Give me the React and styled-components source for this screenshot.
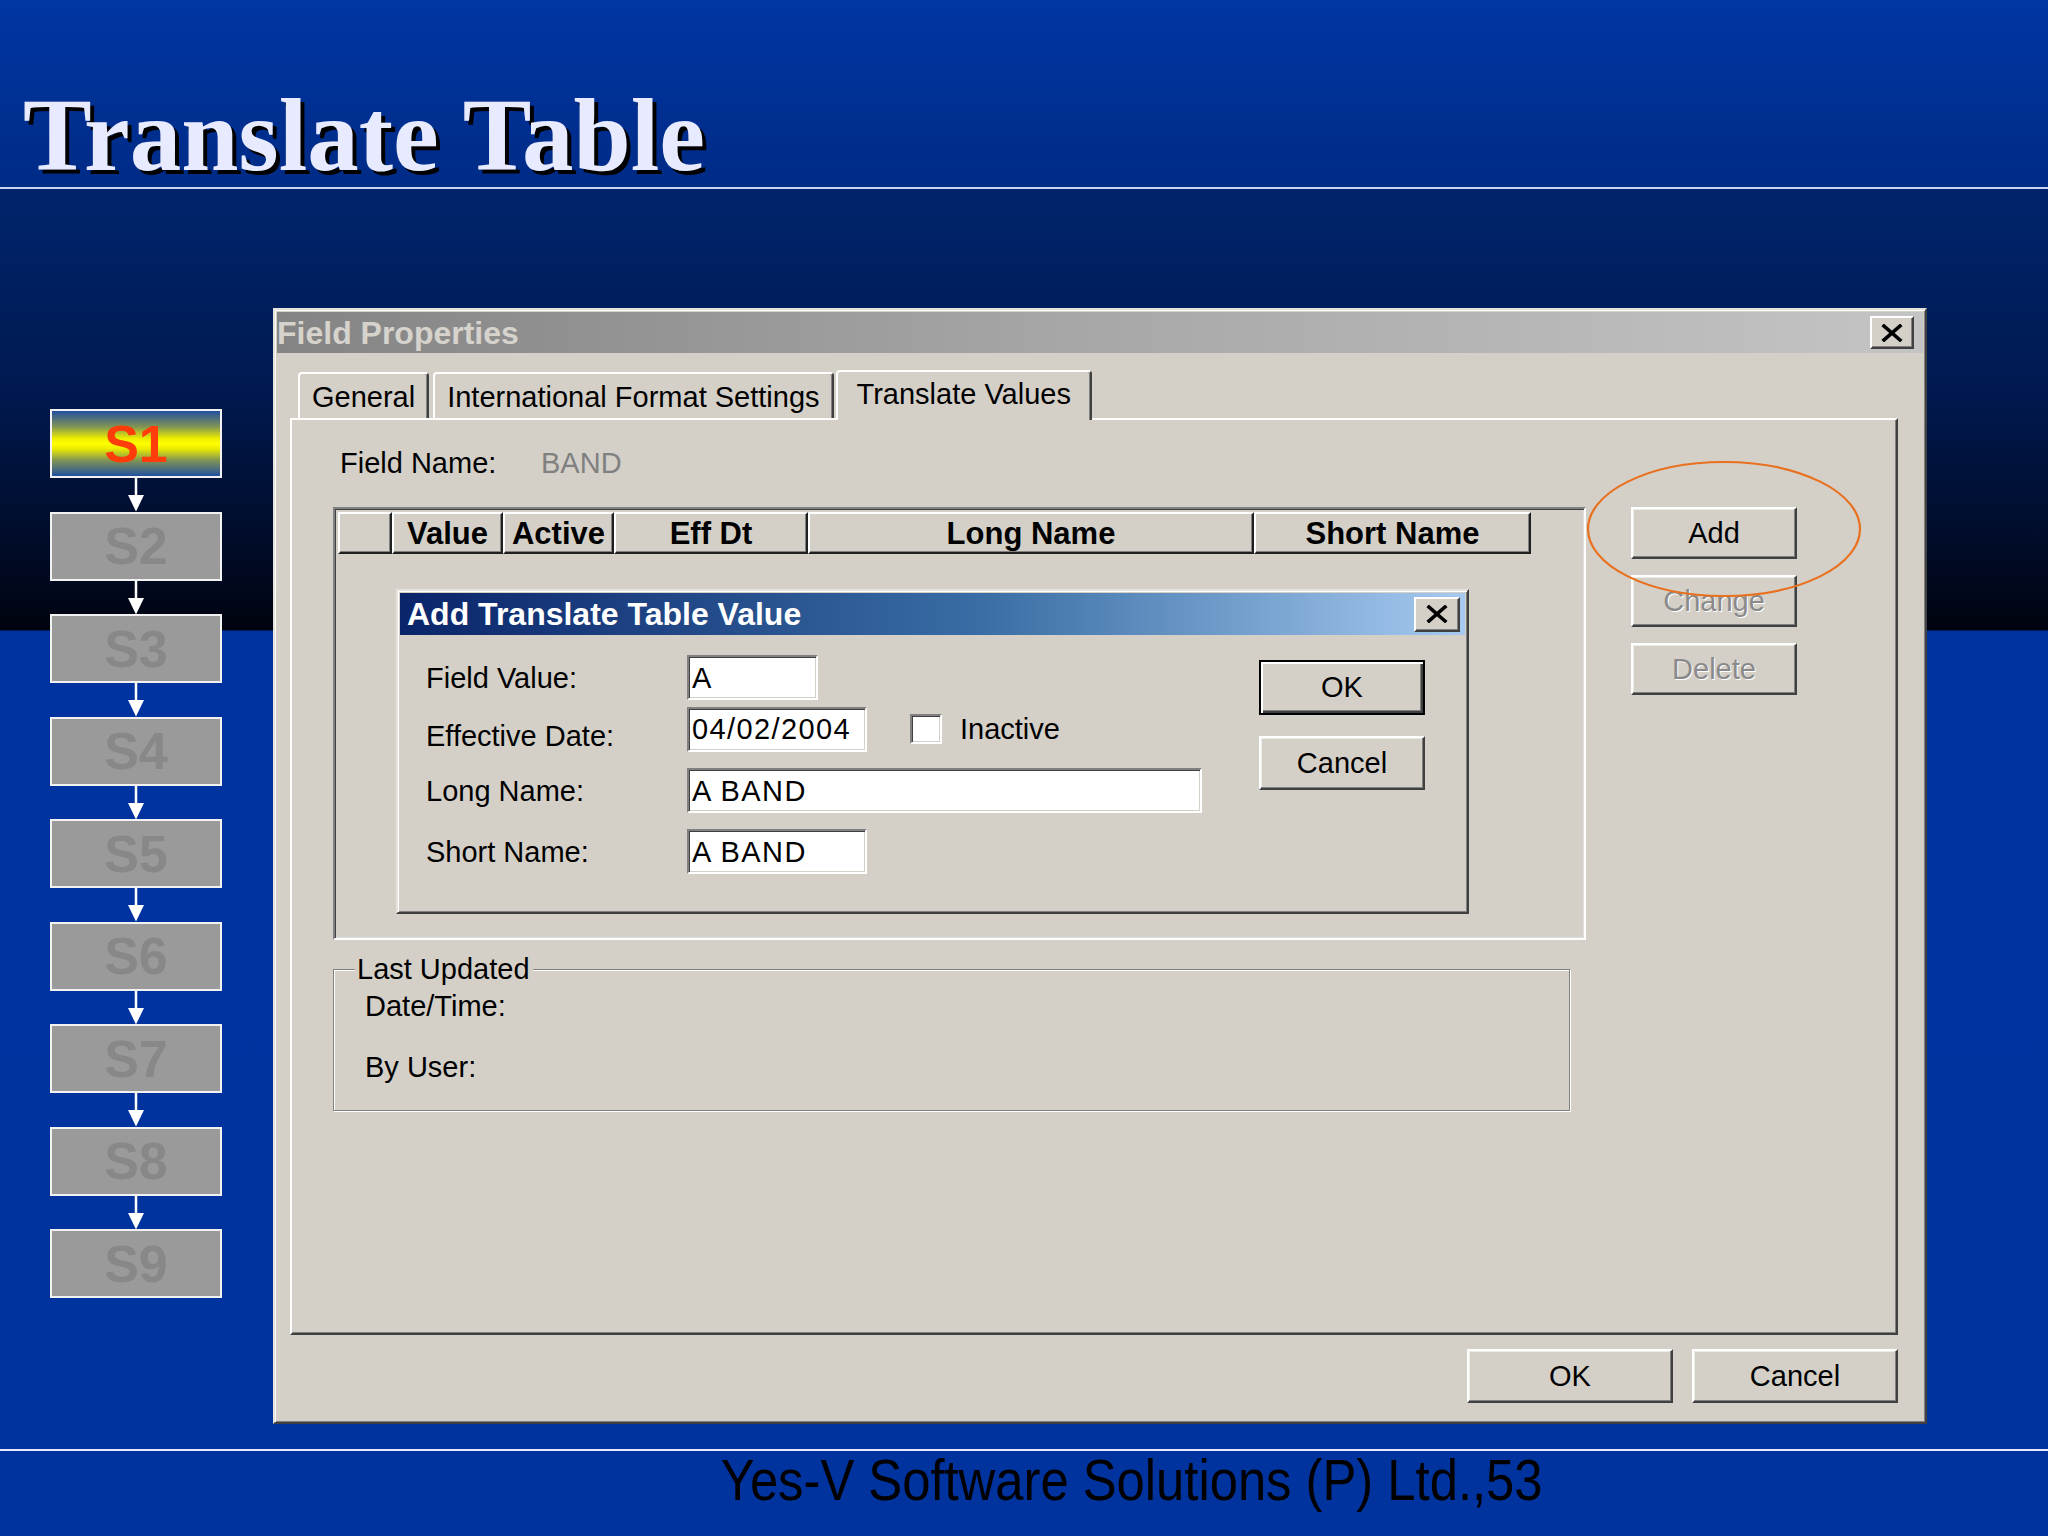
import React from 'react';
import styled, { createGlobalStyle } from 'styled-components';

const Global = createGlobalStyle`
  html, body { margin: 0; padding: 0; }
  body {
    width: 2048px;
    height: 1536px;
    overflow: hidden;
    font-family: "Liberation Sans", Arial, sans-serif;
  }
  * { box-sizing: border-box; }
`;

const Slide = styled.div`
  width: 2048px;
  height: 1536px;
  display: flex;
  flex-direction: column;
  background: linear-gradient(
    to bottom,
    #0036a3 0px,
    #002b86 187px,
    #00246c 189px,
    #001a52 380px,
    #000a24 560px,
    #00040f 630px,
    #0033a0 631px,
    #01339e 1536px
  );
`;

const Header = styled.header`
  height: 187px;
  padding: 84px 0 0 23px;
`;

const Title = styled.h1`
  margin: 0;
  font: bold 103px/103px "Liberation Serif", "Times New Roman", serif;
  color: #e8ebff;
  text-shadow: 4px 4px 0 #000;
`;

const Rule = styled.div`
  height: 2px;
  background: ${p => p.$light ? '#e4eaff' : '#c9d2f5'};
`;

const Main = styled.main`
  height: 1260px;
  display: flex;
  align-items: flex-start;
`;

/* ---------- steps sidebar ---------- */
const Steps = styled.nav`
  margin: 220px 0 0 50px;
  width: 172px;
  display: flex;
  flex-direction: column;
`;

const Step = styled.div`
  height: 69px;
  border: 2px solid #f2f2f2;
  display: flex;
  align-items: center;
  justify-content: center;
  font: bold 52px/1 "Liberation Sans", Arial, sans-serif;
  color: ${p => (p.$active ? '#ff3d0a' : '#888888')};
  background: ${p =>
    p.$active
      ? 'linear-gradient(to bottom, #22509f 0%, #7f9455 24%, #ecec00 42%, #ffff00 50%, #ecec00 58%, #7f9455 76%, #22509f 100%)'
      : '#9a9a9a'};
`;

const ArrowSvg = styled.svg`
  display: block;
  width: 20px;
  height: 33.5px;
  margin: 0 auto;
`;

const Arrow = () => (
  <ArrowSvg viewBox="0 0 20 33.5" preserveAspectRatio="none">
    <line x1="10" y1="0" x2="10" y2="18" stroke="#fff" strokeWidth="2.5" />
    <polygon points="2,17 18,17 10,33.5" fill="#fff" />
  </ArrowSvg>
);

/* ---------- windows ---------- */
const Frame = styled.section`
  width: ${p => p.$w}px;
  height: ${p => p.$h}px;
  margin: ${p => p.$margin};
  padding: 2px;
  display: flex;
  flex-direction: column;
  background: #d4d0c8;
  border: 2px solid;
  border-color: #e6e3dc #404040 #404040 #e6e3dc;
  box-shadow: inset 1px 1px #fff, inset -1px -1px #808080;
  color: #000;
  font: 29px/32px "Liberation Sans", Arial, sans-serif;
`;

const TitleBar = styled.div`
  flex: none;
  height: ${p => p.$h}px;
  display: flex;
  align-items: center;
  justify-content: space-between;
  padding: 0 ${p => p.$pr}px 0 ${p => p.$pl}px;
  background: ${p =>
    p.$active
      ? 'linear-gradient(to right, #0a246a 0%, #3a6ea5 55%, #a6caf0 100%)'
      : 'linear-gradient(to right, #848484 0%, #a8a8a8 50%, #c4c4c4 100%)'};
`;

const TitleText = styled.span`
  font: bold 32px/1 "Liberation Sans", Arial, sans-serif;
  color: ${p => (p.$active ? '#ffffff' : '#d6d3cc')};
  white-space: nowrap;
`;

const CloseButton = styled.button`
  width: ${p => p.$w}px;
  height: ${p => p.$h}px;
  padding: 0;
  display: flex;
  align-items: center;
  justify-content: center;
  background: #d4d0c8;
  border: 2px solid;
  border-color: #fff #404040 #404040 #fff;
  box-shadow: inset -1px -1px #808080;
`;

const CloseIcon = () => (
  <svg width="22" height="18" viewBox="0 0 22 18">
    <path d="M3 2 L19 16 M19 2 L3 16" stroke="#000" strokeWidth="3.6" strokeLinecap="square" />
  </svg>
);

const WindowBody = styled.div`
  flex: 1;
  display: flex;
  flex-direction: column;
  padding: 17px 25px 17px 13px;
`;

/* ---------- tabs ---------- */
const TabRow = styled.div`
  flex: none;
  height: 48px;
  display: flex;
  align-items: flex-end;
  padding-left: 8px;
  position: relative;
  z-index: 1;
`;

const Tab = styled.div`
  height: ${p => (p.$selected ? 50 : 46)}px;
  margin: ${p => (p.$selected ? '0 0 -2px -2px' : '0 4px 0 0')};
  padding: ${p => (p.$selected ? '0 19px' : '0 12px')};
  display: flex;
  align-items: ${p => (p.$selected ? 'flex-start' : 'center')};
  padding-top: ${p => (p.$selected ? 6 : 2)}px;
  background: #d4d0c8;
  border-radius: 4px 4px 0 0;
  border-style: solid;
  border-width: 2px 2px 0 2px;
  border-color: #fff #404040 transparent #fff;
  box-shadow: inset -1px 0 #808080;
  white-space: nowrap;
`;

const Panel = styled.div`
  flex: 1;
  display: flex;
  flex-direction: column;
  border: 2px solid;
  border-color: #fff #404040 #404040 #fff;
  box-shadow: inset -1px -1px #808080;
`;

const FieldNameRow = styled.div`
  display: flex;
  margin: 27px 0 0 48px;
`;

const Label = styled.span`
  width: ${p => (p.$w ? `${p.$w}px` : 'auto')};
  flex: none;
  color: ${p => (p.$muted ? '#808080' : '#000')};
  white-space: nowrap;
  padding-top: ${p => p.$drop || 0}px;
`;

const WorkRow = styled.div`
  display: flex;
  align-items: flex-start;
  margin: 28px 0 0 41px;
`;

const Grid = styled.div`
  width: 1253px;
  height: 433px;
  padding: 3px;
  display: flex;
  flex-direction: column;
  border: 2px solid;
  border-color: #808080 #fff #fff #808080;
  box-shadow: inset 1px 1px #404040, inset -1px -1px #dfdfdf;
`;

const HeaderRow = styled.div`
  display: flex;
  height: 42px;
`;

const HeaderCell = styled.div`
  width: ${p => p.$w}px;
  flex: none;
  display: flex;
  align-items: center;
  justify-content: center;
  overflow: hidden;
  white-space: nowrap;
  font: bold 31px/1 "Liberation Sans", Arial, sans-serif;
  border: 2px solid;
  border-color: #fff #202020 #202020 #fff;
  box-shadow: inset -1px -1px #808080;
`;

const SideButtons = styled.div`
  position: relative;
  margin-left: 45px;
  display: flex;
  flex-direction: column;
  gap: 16px;
`;

const Button = styled.button`
  width: ${p => p.$w}px;
  height: ${p => p.$h}px;
  padding: 0;
  background: #d4d0c8;
  font: 29px/1 "Liberation Sans", Arial, sans-serif;
  color: ${p => (p.disabled ? '#8a8a8a' : '#000')};
  text-shadow: ${p => (p.disabled ? '1px 1px 0 #fff' : 'none')};
  border: 2px solid;
  border-color: ${p => (p.$default ? '#000' : '#fff #404040 #404040 #fff')};
  box-shadow: ${p =>
    p.$default
      ? 'inset 2px 2px #fff, inset -2px -2px #404040, inset -3px -3px #808080'
      : 'inset -1px -1px #808080, inset 1px 1px #ecebe6'};
`;

const Highlight = styled.svg`
  position: absolute;
  left: -44px;
  top: -46px;
  width: 274px;
  height: 136px;
  overflow: visible;
  pointer-events: none;
`;

/* ---------- inner dialog ---------- */
const DialogBody = styled.div`
  flex: 1;
  display: flex;
  padding: 20px 40px 0 26px;
`;

const Form = styled.div`
  flex: 1;
  display: flex;
  flex-direction: column;
`;

const FormRow = styled.div`
  display: flex;
  align-items: center;
  margin-top: ${p => p.$gap}px;
`;

const Input = styled.div`
  width: ${p => p.$w}px;
  height: 45px;
  flex: none;
  display: flex;
  align-items: center;
  padding-left: 3px;
  background: #fff;
  letter-spacing: 1.4px;
  border: 2px solid;
  border-color: #808080 #fff #fff #808080;
  box-shadow: inset 1px 1px #404040, inset -1px -1px #d4d0c8;
  white-space: nowrap;
`;

const Check = styled.span`
  width: 32px;
  height: 30px;
  margin: 0 18px 0 43px;
  background: #fff;
  border: 2px solid;
  border-color: #808080 #fff #fff #808080;
  box-shadow: inset 1px 1px #404040, inset -1px -1px #d4d0c8;
`;

const DialogButtons = styled.div`
  display: flex;
  flex-direction: column;
  gap: 21px;
  padding-top: 5px;
`;

/* ---------- group box ---------- */
const Group = styled.fieldset`
  width: 1237px;
  height: 158px;
  margin: 13px 0 0 41px;
  padding: 5px 0 0 31px;
  min-inline-size: 0;
  border: 1px solid #808080;
  box-shadow: inset 1px 1px #fff, 1px 1px #fff;
`;

const Legend = styled.legend`
  margin-left: -10px;
  padding: 0 3px 0 2px;
  background: #d4d0c8;
  line-height: 32px;
`;

const GroupLine = styled.div`
  margin-top: ${p => p.$gap}px;
  line-height: 32px;
`;

const BottomButtons = styled.div`
  flex: none;
  display: flex;
  justify-content: flex-end;
  gap: 19px;
  margin-top: 14px;
`;

/* ---------- footer ---------- */
const Footer = styled.footer`
  display: flex;
  flex-direction: column;
`;

const FooterText = styled.div`
  display: flex;
  justify-content: center;
  padding-left: 216px;
  font: 58px/58px "Liberation Sans", Arial, sans-serif;
  color: #000;
`;

const Squeeze = styled.span`
  display: inline-block;
  transform: scaleX(0.875);
  white-space: nowrap;
`;

const steps = ['S1', 'S2', 'S3', 'S4', 'S5', 'S6', 'S7', 'S8', 'S9'];
const columns = [
  { label: '', w: 54 },
  { label: 'Value', w: 111 },
  { label: 'Active', w: 111 },
  { label: 'Eff Dt', w: 194 },
  { label: 'Long Name', w: 446 },
  { label: 'Short Name', w: 277 },
];

export default function App() {
  return (
    <>
      <Global />
      <Slide>
        <Header>
          <Title>Translate Table</Title>
        </Header>
        <Rule />
        <Main>
          <Steps>
            {steps.map((s, i) => (
              <React.Fragment key={s}>
                {i > 0 && <Arrow />}
                <Step $active={i === 0}>{s}</Step>
              </React.Fragment>
            ))}
          </Steps>

          <Frame $w={1654} $h={1116} $margin="119px 0 0 51px">
            <TitleBar $h={41} $pl={0} $pr={9}>
              <TitleText>Field Properties</TitleText>
              <CloseButton $w={44} $h={33}><CloseIcon /></CloseButton>
            </TitleBar>
            <WindowBody>
              <TabRow>
                <Tab>General</Tab>
                <Tab>International Format Settings</Tab>
                <Tab $selected>Translate Values</Tab>
              </TabRow>
              <Panel>
                <FieldNameRow>
                  <Label $w={201}>Field Name:</Label>
                  <Label $muted>BAND</Label>
                </FieldNameRow>
                <WorkRow>
                  <Grid>
                    <HeaderRow>
                      {columns.map(c => (
                        <HeaderCell key={c.label || 'sel'} $w={c.w}>{c.label}</HeaderCell>
                      ))}
                    </HeaderRow>
                    <Frame $w={1073} $h={325} $margin="35px 0 0 58px">
                      <TitleBar $active $h={42} $pl={7} $pr={5}>
                        <TitleText $active>Add Translate Table Value</TitleText>
                        <CloseButton $w={46} $h={35}><CloseIcon /></CloseButton>
                      </TitleBar>
                      <DialogBody>
                        <Form>
                          <FormRow $gap={0}>
                            <Label $w={261}>Field Value:</Label>
                            <Input $w={131}>A</Input>
                          </FormRow>
                          <FormRow $gap={6}>
                            <Label $w={261} $drop={14}>Effective Date:</Label>
                            <Input $w={180}>04/02/2004</Input>
                            <Check />
                            <Label>Inactive</Label>
                          </FormRow>
                          <FormRow $gap={16}>
                            <Label $w={261}>Long Name:</Label>
                            <Input $w={515}>A BAND</Input>
                          </FormRow>
                          <FormRow $gap={16}>
                            <Label $w={261}>Short Name:</Label>
                            <Input $w={180}>A BAND</Input>
                          </FormRow>
                        </Form>
                        <DialogButtons>
                          <Button $w={166} $h={55} $default>OK</Button>
                          <Button $w={166} $h={54}>Cancel</Button>
                        </DialogButtons>
                      </DialogBody>
                    </Frame>
                  </Grid>
                  <SideButtons>
                    <Button $w={166} $h={52}>Add</Button>
                    <Button $w={166} $h={52} disabled>Change</Button>
                    <Button $w={166} $h={52} disabled>Delete</Button>
                    <Highlight viewBox="0 0 274 136">
                      <ellipse cx="137" cy="68" rx="136" ry="67" fill="none" stroke="#e8701e" strokeWidth="2.2" />
                    </Highlight>
                  </SideButtons>
                </WorkRow>
                <Group>
                  <Legend>Last Updated</Legend>
                  <GroupLine $gap={0}>Date/Time:</GroupLine>
                  <GroupLine $gap={29}>By User:</GroupLine>
                </Group>
              </Panel>
              <BottomButtons>
                <Button $w={206} $h={54}>OK</Button>
                <Button $w={206} $h={54}>Cancel</Button>
              </BottomButtons>
            </WindowBody>
          </Frame>
        </Main>
        <Footer>
          <Rule $light />
          <FooterText>
            <Squeeze>Yes-V Software Solutions (P) Ltd.,53</Squeeze>
          </FooterText>
        </Footer>
      </Slide>
    </>
  );
}
